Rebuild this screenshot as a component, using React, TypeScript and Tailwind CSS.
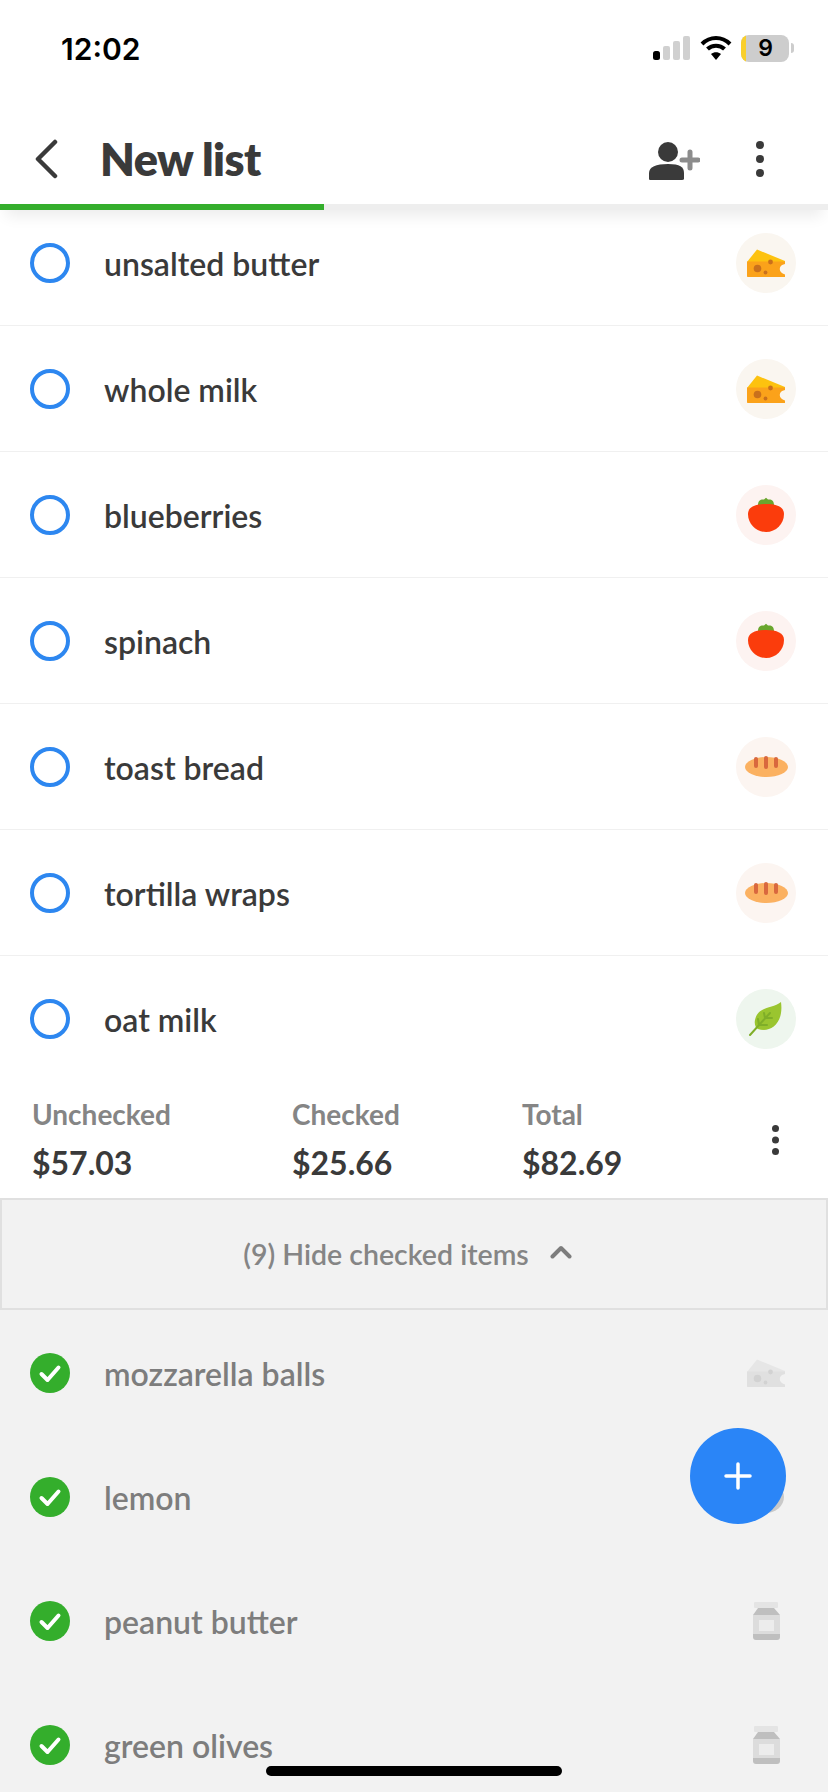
import React from 'react';

type Kind = 'cheese' | 'tomato' | 'bread' | 'leaf' | 'jar' | 'lemon';

const Cheese = ({ grey }: { grey?: boolean }) => (
  <>
    <path d="M11 29 L21 16.500 L49 28 V30 H11 Z" fill={grey ? '#e6e6e6' : '#fdc20f'} />
    <path
      d="M11 28.500 H49 V31 C42 32 42 40 49 41.500 V44 H12 C11.400 44 11 43.600 11 43 Z"
      fill={grey ? '#e0e0e0' : '#fba21a'}
    />
    <circle cx="21.500" cy="35.500" r="3.800" fill={grey ? '#d2d2d2' : '#c9701c'} />
    <circle cx="34.500" cy="29" r="2.400" fill={grey ? '#d2d2d2' : '#c9701c'} />
    <circle cx="29.500" cy="39.500" r="1.900" fill={grey ? '#d2d2d2' : '#c9701c'} />
  </>
);

const Tomato = () => (
  <>
    <path d="M22 20 C22 15 25 14 28 14.500 L30 12.800 L32 14.500 C35 14 38 15 38 20 Z" fill="#6aa62e" />
    <path
      d="M12 29 C12 22 19 19 30 19 C41 19 48 22 48 29 C48 39 40 47 30 47 C20 47 12 39 12 29 Z"
      fill="#fb3c0c"
    />
  </>
);

const Bread = () => (
  <>
    <ellipse cx="30.500" cy="30" rx="21.500" ry="10" fill="#fbb161" />
    <rect x="18" y="20" width="4" height="11" rx="2" fill="#d9683e" />
    <rect x="28" y="19" width="4" height="13" rx="2" fill="#d9683e" />
    <rect x="38" y="20" width="4" height="11" rx="2" fill="#d9683e" />
  </>
);

const Leaf = () => (
  <>
    <path d="M45 13 C36 20 22 17 19 31 C18 36 20 39 22 40 C34 44 48 35 45 13 Z" fill="#9ac52f" />
    <path
      d="M14 46 L34 24 M23 36 L22 30 M23 36 L31 36 M29 29 L28 24 M29 29 L36 29"
      stroke="#7fae28"
      strokeWidth="2"
      strokeLinecap="round"
      fill="none"
    />
  </>
);

const Jar = () => (
  <>
    <rect x="18" y="11" width="24" height="6" rx="1" fill="#e4e4e4" />
    <path d="M22 17 H38 L44 24 V28 H17 V24 Z" fill="#bfbfbf" />
    <rect x="17" y="24" width="27" height="20" fill="#dcdcdc" />
    <path d="M17 43 H44 V46 C44 48 43 49 41 49 H20 C18 49 17 48 17 46 Z" fill="#bfbfbf" />
    <rect x="23" y="29" width="15" height="11" fill="#ececec" />
  </>
);

const Lemon = () => (
  <>
    <ellipse cx="30" cy="30" rx="18" ry="16" fill="#c9c9c9" />
  </>
);

const ItemIcon = ({ kind, grey }: { kind: Kind; grey?: boolean }) => (
  <svg viewBox="0 0 60 60" className="w-[60px] h-[60px] shrink-0">
    {kind === 'cheese' && <Cheese grey={grey} />}
    {kind === 'tomato' && <Tomato />}
    {kind === 'bread' && <Bread />}
    {kind === 'leaf' && <Leaf />}
    {kind === 'jar' && <Jar />}
    {kind === 'lemon' && <Lemon />}
  </svg>
);

const open = [
  { name: 'unsalted butter', kind: 'cheese', tint: 'bg-[#faf6f0]' },
  { name: 'whole milk', kind: 'cheese', tint: 'bg-[#faf6f0]' },
  { name: 'blueberries', kind: 'tomato', tint: 'bg-[#fdf3f1]' },
  { name: 'spinach', kind: 'tomato', tint: 'bg-[#fdf3f1]' },
  { name: 'toast bread', kind: 'bread', tint: 'bg-[#fcf5f1]' },
  { name: 'tortilla wraps', kind: 'bread', tint: 'bg-[#fcf5f1]' },
  { name: 'oat milk', kind: 'leaf', tint: 'bg-[#eef6ee]' },
] as const;

const done = [
  { name: 'mozzarella balls', kind: 'cheese' },
  { name: 'lemon', kind: 'lemon' },
  { name: 'peanut butter', kind: 'jar' },
  { name: 'green olives', kind: 'jar' },
] as const;

const totals = [
  { label: 'Unchecked', value: '$57.03', width: 'w-[260px]' },
  { label: 'Checked', value: '$25.66', width: 'w-[230px]' },
  { label: 'Total', value: '$82.69', width: 'w-[250px]' },
];

const Dots = ({ r, gap }: { r: number; gap: number }) => (
  <svg width={r * 2} height={gap * 2 + r * 2} className="shrink-0">
    <circle cx={r} cy={r} r={r} fill="#3a3a3a" />
    <circle cx={r} cy={r + gap} r={r} fill="#3a3a3a" />
    <circle cx={r} cy={r + gap * 2} r={r} fill="#3a3a3a" />
  </svg>
);

const StatusBar = () => (
  <div className="h-[100px] flex items-start justify-between pt-[33px] pl-[61px] pr-[34px]">
    <span className="text-[30px] leading-[32px] font-semibold text-black font-['Inter',sans-serif]">12:02</span>
    <div className="flex items-center gap-[9px] h-[30px]">
      <svg width="38" height="24" viewBox="0 0 38 24">
        <rect x="0" y="15" width="7" height="9" rx="2.500" fill="#000" />
        <rect x="10" y="10" width="7" height="14" rx="2" fill="#d0d0d0" />
        <rect x="20" y="5" width="7" height="19" rx="2" fill="#d0d0d0" />
        <rect x="30" y="0" width="7" height="24" rx="2" fill="#d0d0d0" />
      </svg>
      <svg width="32" height="24" viewBox="0 0 32 24">
        <path d="M2 8 C10 0 22 0 30 8" stroke="#000" strokeWidth="4" fill="none" />
        <path d="M7.500 13 C12 8.500 20 8.500 24.500 13" stroke="#000" strokeWidth="4" fill="none" />
        <path d="M16 24 L11 18 C14 15.500 18 15.500 21 18 Z" fill="#000" />
      </svg>
      <div className="relative flex items-center">
        <div className="w-[48px] h-[27px] rounded-[8px] overflow-hidden bg-[#cdcdcd] flex">
          <div className="w-[5px] bg-[#f9cf2c]" />
          <div className="flex-1 flex items-center justify-center pr-[4px] text-[23px] leading-none font-semibold text-black font-['Inter',sans-serif]">
            9
          </div>
        </div>
        <div className="ml-[2px] w-[3px] h-[10px] rounded-r-sm bg-[#cdcdcd]" />
      </div>
    </div>
  </div>
);

const Header = () => (
  <div className="relative z-10 shadow-[0_12px_14px_-6px_rgba(0,0,0,0.08)]">
    <div className="h-[104px] flex items-center pt-[14px]">
      <svg width="24" height="40" viewBox="0 0 24 40" className="ml-[34px] shrink-0">
        <path d="M21 3 L4 20 L21 37" stroke="#3a3a3a" strokeWidth="4.500" strokeLinecap="round" strokeLinejoin="round" fill="none" />
      </svg>
      <h1 className="ml-[42px] text-[45px] leading-none font-extrabold text-[#3a3a3a] tracking-[-0.6px]">New list</h1>
      <svg width="52" height="38" viewBox="0 0 52 38" className="ml-auto mt-[4px] shrink-0">
        <circle cx="20" cy="10" r="10" fill="#3a3a3a" />
        <path d="M2 38 C1 38 1 37 1 36 V31 C1 25 8 22 20 22 C32 22 36 25 36 31 V36 C36 37 36 38 34 38 Z" fill="#3a3a3a" />
        <path d="M42 10 V26 M34 18 H50" stroke="#8c8c8c" strokeWidth="5" strokeLinecap="round" />
      </svg>
      <div className="ml-[56px] mr-[64px] flex">
        <Dots r={4} gap={14} />
      </div>
    </div>
    <div className="h-[6px] bg-[#eeeeee]">
      <div className="h-full w-[324px] bg-[#34ae2c]" />
    </div>
  </div>
);

const OpenRow = ({ name, kind, tint }: { name: string; kind: Kind; tint: string }) => (
  <div className="h-[126px] flex items-center pl-[30px] pr-[32px] border-b border-[#f0f0f0] last:border-b-0">
    <div className="w-[40px] h-[40px] rounded-full border-[4px] border-[#2d87f0] shrink-0" />
    <span className="ml-[34px] pt-[2px] text-[32px] leading-none font-semibold text-[#3a3a3a]">{name}</span>
    <div className={`ml-auto rounded-full ${tint}`}>
      <ItemIcon kind={kind} />
    </div>
  </div>
);

const DoneRow = ({ name, kind }: { name: string; kind: Kind }) => (
  <div className="h-[124px] flex items-center pl-[30px] pr-[32px]">
    <svg width="40" height="40" viewBox="0 0 40 40" className="shrink-0">
      <circle cx="20" cy="20" r="20" fill="#34ae2c" />
      <path d="M11.500 21 L17.500 27 L28.500 14.500" stroke="#fff" strokeWidth="4" strokeLinecap="round" strokeLinejoin="round" fill="none" />
    </svg>
    <span className="ml-[34px] pt-[2px] text-[32px] leading-none font-semibold text-[#7d7d7d]">{name}</span>
    <div className="ml-auto">
      <ItemIcon kind={kind} grey />
    </div>
  </div>
);

export default function App() {
  return (
    <div className="relative h-[1792px] w-[828px] overflow-hidden bg-white font-['Lato',sans-serif]">
      <StatusBar />
      <Header />

      <div className="-mt-[10px]">
        {open.map((item) => (
          <OpenRow key={item.name} name={item.name} kind={item.kind} tint={item.tint} />
        ))}
      </div>

      {/* Totals */}
      <div className="h-[116px] flex items-start pl-[32px] pt-[15px]">
        {totals.map((t) => (
          <div key={t.label} className={t.width}>
            <div className="text-[28px] leading-[34px] font-bold text-[#858585]">{t.label}</div>
            <div className="mt-[13px] text-[32px] leading-[38px] font-bold text-[#3a3a3a]">{t.value}</div>
          </div>
        ))}
        <div className="mt-[28px]">
          <Dots r={3.500} gap={11.500} />
        </div>
      </div>

      <div className="h-[1000px] bg-[#f2f2f2]">
        <div className="h-[112px] border-2 border-[#e0e0e0] flex items-center justify-center gap-[21px] pr-[13px]">
          <span className="text-[28.500px] leading-none font-semibold text-[#858585]">(9) Hide checked items</span>
          <svg width="22" height="14" viewBox="0 0 22 14" className="shrink-0 mb-[4px]">
            <path d="M2.500 11.500 L11 3 L19.500 11.500" stroke="#7d7d7d" strokeWidth="4" strokeLinecap="round" strokeLinejoin="round" fill="none" />
          </svg>
        </div>
        <div className="pt-[1px]">
          {done.map((item) => (
            <DoneRow key={item.name} name={item.name} kind={item.kind} />
          ))}
        </div>
      </div>

      {/* Add button */}
      <button className="absolute left-[690px] top-[1428px] w-[96px] h-[96px] rounded-full bg-[#2a85f7] flex items-center justify-center">
        <svg width="28" height="28" viewBox="0 0 28 28">
          <path d="M14 2 V26 M2 14 H26" stroke="#fff" strokeWidth="3.500" strokeLinecap="round" />
        </svg>
      </button>

      {/* Home indicator */}
      <div className="absolute left-[266px] top-[1766px] w-[296px] h-[10px] rounded-full bg-black" />
    </div>
  );
}
